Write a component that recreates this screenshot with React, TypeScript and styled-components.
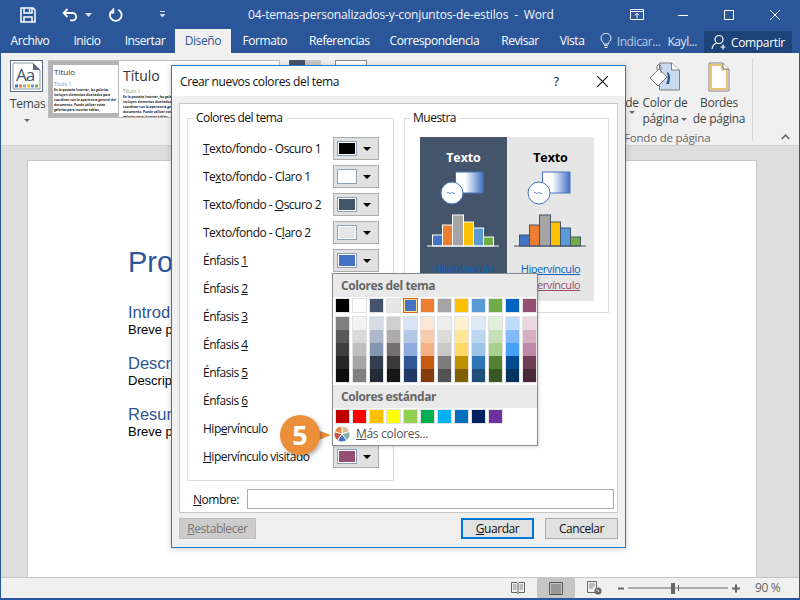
import React from "react";
import styled, { createGlobalStyle } from "styled-components";

const UI = `"Open Sans", "Noto Sans", sans-serif`;

const Global = createGlobalStyle`
  html, body { margin: 0; padding: 0; background: #fff; }
  * { box-sizing: border-box; }
`;

const Frame = styled.div`
  position: relative; width: 800px; height: 600px; overflow: hidden;
  display: flex; flex-direction: column;
  background: #2b579a; font-family: ${UI}; font-size: 12px; color: #222;
`;
const TitleBar = styled.div`
  height: 29px; flex: none; display: flex; align-items: center; color: #fff; position: relative;
`;
const Qat = styled.div`display: flex; align-items: center; padding-left: 20px; gap: 0;`;
const QatSlot = styled.div<{ $w: number }>`width: ${p => p.$w}px; display: flex; align-items: center;`;
const TitleText = styled.div`
  position: absolute; left: 248px; top: 5px; width: 304px; text-align: left; white-space: pre;
  font-size: 12px; letter-spacing: -0.15px; color: #f2f5fa; line-height: 20px;
`;
const WinButtons = styled.div`margin-left: auto; display: flex; align-items: center; padding-right: 2px;`;
const WinBtn = styled.div<{ $w: number }>`width: ${p => p.$w}px; display: flex; justify-content: center;`;

const TabBar = styled.div`
  height: 24px; flex: none; display: flex; align-items: stretch; color: #fff;
`;
const Tab = styled.div<{ $active?: boolean; $after?: number }>`
  padding: 0 ${p => (p.$active ? 10 : 10.5)}px; line-height: 24px; font-size: 12px; letter-spacing: -0.42px; white-space: nowrap;
  margin-right: ${p => p.$after ?? 0}px;
  ${p => (p.$active ? `background: #f0f0f0; color: #2b579a; margin-left: 1px;` : "")}
`;
const TabRight = styled.div`margin-left: auto; display: flex; align-items: center; padding-right: 8px;`;
const TellMe = styled.div`display: flex; align-items: center; gap: 5px; color: #b8c9e2; letter-spacing: -0.42px; margin-right: 7px;`;
const User = styled.div`color: #dfe7f3; letter-spacing: -0.42px; margin-right: 7px;`;
const Share = styled.div`
  width: 88px; height: 22px; margin-top: 2px; background: #1e4379; display: flex; align-items: center; gap: 4px; padding-left: 7px; letter-spacing: -0.35px;
  color: #fff;
`;

const Ribbon = styled.div`
  height: 93px; flex: none; background: #f0f0f0; border-bottom: 1px solid #d2d2d2; display: flex; position: relative; color: #444;
  margin: 0 1px;
`;
const ThemeGroup = styled.div`
  width: 47px; padding: 7px 0 0 9px; display: flex; flex-direction: column; align-items: flex-start;
`;
const ThemeLabel = styled.div`width: 34px; text-align: center; line-height: 16px; margin-top: 4px; letter-spacing: -0.3px;`;
const Caret = styled.span`
  display: inline-block; width: 0; height: 0; border: 3px solid transparent; border-top: 3px solid #666; border-bottom: 0; vertical-align: middle;
`;
const CaretRow = styled.div`width: 34px; text-align: center; line-height: 10px; margin-top: 3px;`;
const Gallery = styled.div`
  width: 232px; height: 58px; margin-top: 7px; border: 1px solid #bcbcbc; background: #fff; display: flex; overflow: hidden;
`;
const Thumb = styled.div<{ $sel?: boolean }>`
  width: 74px; flex: none; padding: 5px 0 0 4px; background: #fff; color: #333; overflow: hidden;
  ${p => (p.$sel ? `border: 4px solid #b4b4b4; border-right: 1px solid #b4b4b4; padding: 0 0 0 1px; width: 70px;` : "")}
`;
const ThumbTitle = styled.div<{ $big?: boolean }>`font-size: ${p => (p.$big ? 14 : 8)}px; line-height: ${p => (p.$big ? 20 : 14)}px; white-space: nowrap;`;
const ThumbHead = styled.div<{ $c: string; $top: number }>`font-size: 5px; line-height: 8px; color: ${p => p.$c}; margin-top: ${p => p.$top}px;`;
const ThumbBody = styled.div`font-size: 3.2px; font-weight: 700; line-height: 5px; color: #222; width: 64px;`;
const SwatchPeek = styled.div`display: flex; margin: 7px 0 0 9px; height: 10px;`;
const PeekBox = styled.div<{ $c: string; $w: number }>`width: ${p => p.$w}px; height: 10px; background: ${p => p.$c};`;
const PeekOutline = styled.div`width: 32px; height: 10px; margin: 7px 0 0 14px; border: 1px solid #888; background: #fff;`;
const RibbonFill = styled.div`flex: 1;`;
const RibbonItem = styled.div<{ $w: number }>`
  width: ${p => p.$w}px; display: flex; flex-direction: column; align-items: center; padding-top: 9px; line-height: 16px; letter-spacing: -0.25px; text-align: center; white-space: nowrap;
`;
const ItemIcon = styled.div`height: 33px;`;
const PageBackgroundLabel = styled.div`
  position: absolute; left: 623px; top: 77px; line-height: 16px; color: #666; letter-spacing: -0.2px; font-size: 11.5px; white-space: nowrap;
`;
const RibbonSep = styled.div`width: 1px; background: #d6d6d6; margin: 5px 0 4px 6px;`;
const Collapse = styled.div`width: 46px; display: flex; justify-content: flex-end; align-items: flex-end; padding: 0 9px 5px 0;`;

const DocArea = styled.div`
  flex: 1; background: #dedede; margin: 0 1px; padding: 14px 0 0 26px; overflow: hidden;
`;
const Page = styled.div`
  width: 730px; height: 440px; background: #fff; border: 1px solid #c6c6c6; padding: 84px 0 0 100px; font-family: "Liberation Sans", Arial, sans-serif;
`;
const DocTitle = styled.div`font-size: 29px; line-height: 34px; color: #2b579a; white-space: nowrap;`;
const DocHead = styled.div<{ $first?: boolean }>`font-size: 16.5px; line-height: 19px; color: #2f5597; margin-top: ${p => (p.$first ? 24 : 17)}px; white-space: nowrap;`;
const DocText = styled.div`font-size: 13px; line-height: 15px; color: #000; white-space: nowrap;`;

const StatusBar = styled.div`
  height: 21px; flex: none; margin: 0 1px 2px; background: #f0f0f0; border-top: 1px solid #c6c6c6; display: flex; align-items: stretch; justify-content: flex-end; color: #555;
`;
const ViewBtn = styled.div<{ $active?: boolean }>`
  width: 38px; display: flex; align-items: center; justify-content: center; background: ${p => (p.$active ? "#c6c6c6" : "transparent")};
`;
const ZoomWrap = styled.div`display: flex; align-items: center; width: 137px; margin-left: 5px;`;
const ZoomPct = styled.div`width: 44px; text-align: left; letter-spacing: -0.4px; line-height: 20px; color: #666;`;

const Dialog = styled.div`
  position: absolute; left: 171px; top: 65px; width: 455px; height: 483px; background: #f0f0f0; border: 1px solid #2a7ac4;
  box-shadow: 0 1px 6px rgba(0,0,0,.2); display: flex; flex-direction: column; color: #111;
`;
const DialogHead = styled.div`
  height: 30px; flex: none; background: #fff; display: flex; align-items: center; padding-left: 8px; font-size: 12px; letter-spacing: -0.38px;
`;
const HeadBtn = styled.div<{ $w: number }>`width: ${p => p.$w}px; text-align: center; font-size: 13px; display: flex; justify-content: center;`;
const HeadBtns = styled.div`margin-left: auto; display: flex; align-items: center;`;
const DialogBody = styled.div`flex: none; padding: 7px 7px 0;`;
const Panel = styled.div`
  height: 410px; background: #fff; border: 1px solid #c8c8c8; padding: 6px 8px 0 7px;
`;
const Columns = styled.div`display: flex; gap: 10px; align-items: flex-start;`;
const Group = styled.fieldset<{ $w: number; $h: number }>`
  width: ${p => p.$w}px; height: ${p => p.$h}px; margin: 0; border: 1px solid #dcdcdc; padding: 3px 0 0 0; min-width: 0;
`;
const Legend = styled.legend`margin-left: 5px; padding: 0 3px; line-height: 16px; font-size: 12px; letter-spacing: -0.5px;`;
const Rows = styled.div`display: flex; flex-direction: column; gap: 5px; margin-top: 8px;`;
const Row = styled.div`height: 23px; display: flex; align-items: center; padding-left: 15px;`;
const RowLabel = styled.div`width: 130px; white-space: nowrap; letter-spacing: -0.5px; line-height: 20px;`;
const ColorBtn = styled.div`
  width: 46px; height: 23px; background: #e1e1e1; border: 1px solid #adadad; display: flex; align-items: center; padding-left: 3px; gap: 6px;
`;
const ColorChip = styled.div<{ $c: string }>`width: 20px; height: 15px; background: ${p => p.$c}; border: 1px solid #8ea0b5; box-shadow: inset 0 0 0 1px #fff;`;
const BlackCaret = styled.div`width: 0; height: 0; border: 4px solid transparent; border-top: 4px solid #000; border-bottom: 0;`;
const PreviewBox = styled.div`display: flex; width: 174px; margin: 8px 0 0 15px; height: 164px;`;
const Pane = styled.div<{ $dark?: boolean }>`
  width: 87px; height: 164px; background: ${p => (p.$dark ? "#44546a" : "#e7e6e6")}; color: ${p => (p.$dark ? "#fff" : "#000")}; text-align: center; padding-top: 12px;
`;
const PaneTitle = styled.div`font-weight: 700; font-size: 12.5px; line-height: 17px; letter-spacing: -0.1px; margin-bottom: 5px;`;
const PaneArt = styled.svg`display: block;`;
const LinkLine = styled.div<{ $c: string; $top: number }>`
  color: ${p => p.$c}; text-decoration: underline; line-height: 16px; letter-spacing: -0.45px; margin-top: ${p => p.$top}px; font-size: 11px; white-space: nowrap;
`;
const NameRow = styled.div`display: flex; align-items: center; margin-top: 8px; padding-left: 6px;`;
const NameLabel = styled.div`width: 54px; flex: none; letter-spacing: -0.5px;`;
const NameInput = styled.div`width: 367px; flex: none; height: 20px; background: #fff; border: 1px solid #ababab;`;
const Footer = styled.div`display: flex; align-items: stretch; padding: 5px 7px 0; height: 26px; gap: 11px;`;
const FootBtn = styled.div<{ $w: number; $kind?: "primary" | "off" }>`
  width: ${p => p.$w}px; height: 21px; display: flex; align-items: center; justify-content: center; letter-spacing: -0.45px;
  background: ${p => (p.$kind === "off" ? "#cccccc" : "#e1e1e1")};
  border: ${p => (p.$kind === "primary" ? "2px solid #0078d7" : `1px solid ${p.$kind === "off" ? "#bfbfbf" : "#adadad"}`)};
  color: ${p => (p.$kind === "off" ? "#787878" : "#111")};
`;
const FootGap = styled.div`flex: 1;`;

const Popup = styled.div`
  position: absolute; left: 332px; top: 273px; width: 206px; height: 173px; background: #fff; border: 1px solid #8a8a8a; box-shadow: 1px 1px 3px rgba(0,0,0,.15);
  display: flex; flex-direction: column;
`;
const PopHead = styled.div`height: 23px; flex: none; background: #e9e9e9; padding-left: 8px; font-weight: 700; line-height: 23px; letter-spacing: -0.4px; color: #666; font-size: 12px;`;
const SwatchRow = styled.div<{ $t: number }>`display: flex; gap: 4px; padding: ${p => p.$t}px 0 0 3px;`;
const Swatch = styled.div<{ $c: string; $sel?: boolean }>`
  width: 13px; height: 13px; background: ${p => p.$c}; box-shadow: 0 0 0 1px #e2e2e2;
  ${p => (p.$sel ? `box-shadow: 0 0 0 1px #e2621a, inset 0 0 0 1px #ffe294;` : "")}
`;
const ShadeGrid = styled.div`display: flex; gap: 4px; padding: 5px 0 3px 3px;`;
const ShadeCol = styled.div`display: flex; flex-direction: column; box-shadow: 0 0 0 1px #e2e2e2;`;
const Shade = styled.div<{ $c: string }>`width: 13px; height: 13px; background: ${p => p.$c};`;
const MoreRow = styled.div`display: flex; align-items: center; gap: 6px; margin-top: 3px; padding-left: 1px; color: #555; letter-spacing: -0.3px; line-height: 16px;`;

const Badge = styled.div`
  position: absolute; left: 280px; top: 415px; width: 40px; height: 40px; border-radius: 50%; background: #ec8f3a; color: #fff;
  display: flex; align-items: center; justify-content: center; font-weight: 700; font-size: 27px; line-height: 40px;
  box-shadow: 2px 2px 4px rgba(0,0,0,.3);
`;
const BadgeTip = styled.svg`position: absolute; left: 314px; top: 424px;`;

const U = styled.span`text-decoration: underline;`;

const theme = ["#000000", "#ffffff", "#44546a", "#e7e6e6", "#4472c4", "#ed7d31", "#a5a5a5", "#ffc000", "#5b9bd5", "#70ad47", "#0563c1", "#954f72"];
const shades = [
  ["#7f7f7f", "#595959", "#3f3f3f", "#262626", "#0c0c0c"],
  ["#f2f2f2", "#d9d9d9", "#bfbfbf", "#a6a6a6", "#7f7f7f"],
  ["#d6dce5", "#adb9ca", "#8497b0", "#333f50", "#222a35"],
  ["#d0cece", "#aeabab", "#757070", "#3a3838", "#171616"],
  ["#dae3f3", "#b4c7e7", "#8faadc", "#2f5597", "#203864"],
  ["#fbe5d6", "#f8cbad", "#f4b183", "#c55a11", "#843c0c"],
  ["#ededed", "#dbdbdb", "#c9c9c9", "#7b7b7b", "#525252"],
  ["#fff2cc", "#ffe699", "#ffd966", "#bf9000", "#7f6000"],
  ["#deebf7", "#bdd7ee", "#9dc3e6", "#2e75b6", "#1f4e79"],
  ["#e2f0d9", "#c5e0b4", "#a9d18e", "#548235", "#385723"],
  ["#c0dcfb", "#84b9f9", "#48a0f9", "#034b90", "#023260"],
  ["#ead7e2", "#d5b0c5", "#c088a8", "#6f3b55", "#4a2739"],
];
const standard = ["#c00000", "#ff0000", "#ffc000", "#ffff00", "#92d050", "#00b050", "#00b0f0", "#0070c0", "#002060", "#7030a0"];

const rows: [React.ReactNode, string][] = [
  [<><U>T</U>exto/fondo - Oscuro 1</>, "#000000"],
  [<>Te<U>x</U>to/fondo - Claro 1</>, "#ffffff"],
  [<>Texto/fondo - <U>O</U>scuro 2</>, "#44546a"],
  [<>Texto/fondo - C<U>l</U>aro 2</>, "#e7e6e6"],
  [<>Énfasis <U>1</U></>, "#4472c4"],
  [<>Énfasis <U>2</U></>, "#ed7d31"],
  [<>Énfasis <U>3</U></>, "#a5a5a5"],
  [<>Énfasis <U>4</U></>, "#ffc000"],
  [<>Énfasis <U>5</U></>, "#5b9bd5"],
  [<>Énfasis <U>6</U></>, "#70ad47"],
  [<>Hip<U>e</U>rvínculo</>, "#0563c1"],
  [<><U>H</U>ipervínculo visitado</>, "#954f72"],
];

const ink = { fill: "none", stroke: "#fff", strokeWidth: 1.5 };

const SaveIcon = () => (
  <svg width="16" height="16" viewBox="0 0 16 16">
    <path d="M1 1h12l2 2v12H1z" {...ink} />
    <path d="M4 1v5h8V1M4 15v-5h8v5" {...ink} />
    <path d="M9.5 2v3" {...ink} />
  </svg>
);
const UndoIcon = () => (
  <svg width="16" height="14" viewBox="0 0 16 14">
    <path d="M2 5h8.5a3.6 3.6 0 0 1 0 7.4H8" fill="none" stroke="#fff" strokeWidth="1.8" />
    <path d="M5.5 1 1.6 5l3.9 4" fill="none" stroke="#fff" strokeWidth="1.8" />
  </svg>
);
const RepeatIcon = () => (
  <svg width="14" height="14" viewBox="0 0 14 14">
    <path d="M9.2 1.8A5.8 5.8 0 1 1 4 2" fill="none" stroke="#fff" strokeWidth="1.8" />
    <path d="M4.4 .2v4.6H.6" fill="none" stroke="#fff" strokeWidth="1.6" />
  </svg>
);
const CaretW = () => <svg width="7" height="4" viewBox="0 0 7 4"><path d="M0 0h7L3.5 4z" fill="#d6e0ef" /></svg>;
const QatMore = () => (
  <svg width="7" height="7" viewBox="0 0 7 7"><path d="M1 .5h5" stroke="#d6e0ef" /><path d="M.5 3h6L3.5 6.5z" fill="#d6e0ef" /></svg>
);
const RibbonDisplay = () => (
  <svg width="14" height="11" viewBox="0 0 14 11">
    <path d="M.5.5h13v10H.5zM.5 2.5h13" fill="none" stroke="#fff" />
    <path d="M7 9.5V4.5M4.8 6.5 7 4.2l2.2 2.3" fill="none" stroke="#fff" />
  </svg>
);
const MinIcon = () => <svg width="10" height="10" viewBox="0 0 10 10"><path d="M0 5.5h10" stroke="#fff" /></svg>;
const MaxIcon = () => <svg width="10" height="10" viewBox="0 0 10 10"><path d="M.5.5h9v9h-9z" fill="none" stroke="#fff" /></svg>;
const CloseIcon = ({ c = "#fff", s = 10 }: { c?: string; s?: number }) => (
  <svg width={s} height={s} viewBox="0 0 10 10"><path d="M0 0l10 10M10 0 0 10" stroke={c} strokeWidth={1} /></svg>
);
const Bulb = () => (
  <svg width="12" height="16" viewBox="0 0 12 16">
    <path d="M3.6 11c0-2-2.6-3-2.6-5.8a5 5 0 0 1 10 0C11 8 8.4 9 8.4 11z" fill="none" stroke="#e8eef7" />
    <path d="M4 12.5h4M4.6 14.5h2.8" stroke="#e8eef7" />
  </svg>
);
const PersonAdd = () => (
  <svg width="16" height="16" viewBox="0 0 16 16">
    <circle cx="8" cy="5.5" r="4" fill="none" stroke="#fff" strokeWidth="1.2" />
    <path d="M1 15c.6-3.2 2.6-5.6 5-6M12 10.5v5M9.5 13h5" fill="none" stroke="#fff" strokeWidth="1.2" />
  </svg>
);
const ThemesIcon = () => (
  <svg width="33" height="32" viewBox="0 0 33 32">
    <rect x=".5" y=".5" width="32" height="31" fill="#fff" stroke="#5b6a80" />
    <path d="M3 3h20l7 7v19H3z" fill="#fff" stroke="#8b94a3" />
    <path d="M23 3v7h7z" fill="#5b6a80" />
    <text x="6" y="21" fontFamily="Open Sans, sans-serif" fontSize="17" letterSpacing="-1" fill="#44546a">Aa</text>
    {["#4472c4", "#ed7d31", "#a5a5a5", "#ffc000", "#5b9bd5", "#70ad47"].map((c, i) => (
      <rect key={c} x={5 + i * 4} y="24.5" width="3" height="3" fill={c} />
    ))}
  </svg>
);
const PageColorIcon = () => (
  <svg width="32" height="30" viewBox="0 0 32 30">
    <path d="M10.5 1h12l8 7v20h-20z" fill="#c9d9ef" stroke="#7f7f7f" />
    <path d="M22.5 1v7h8" fill="#fff" stroke="#7f7f7f" />
    <path d="M10 7 1 16l8 8 9-9z" fill="#fff" stroke="#7f7f7f" />
    <path d="M8 8V4.5a2 2 0 0 1 4 0V11" fill="none" stroke="#7f7f7f" />
    <path d="M18 10c3 1 4 5 2 12h-3c2-4 2-7 1-12z" fill="#2b579a" />
  </svg>
);
const PageBorderIcon = () => (
  <svg width="22" height="30" viewBox="0 0 22 30">
    <path d="M1 1h14l6 6v22H1z" fill="#fff" stroke="#7f7f7f" />
    <path d="M3 3h11v4.5h5V27H3z" fill="none" stroke="#e8c477" strokeWidth="2" />
    <path d="M15 1v6h6" fill="#fff" stroke="#7f7f7f" />
  </svg>
);

const Art = ({ dark }: { dark?: boolean }) => {
  const id = dark ? "gd" : "gl";
  const line = dark ? "#fff" : "#44546a";
  const bars: [number, number, number, string][] = [
    [12, 10, 11, "#4472c4"], [22, 10, 21, "#ed7d31"], [32, 11, 31, "#a5a5a5"],
    [43, 10, 24, "#ffc000"], [53, 10, 18, "#5b9bd5"], [63, 10, 9, "#70ad47"],
  ];
  return (
    <PaneArt width="87" height="80" viewBox="0 0 87 80">
      <defs>
        <linearGradient id={id}>
          <stop offset="0" stopColor="#fff" />
          <stop offset=".35" stopColor="#fff" />
          <stop offset="1" stopColor="#4472c4" />
        </linearGradient>
      </defs>
      <rect x="35.5" y="1" width="27.5" height="21" fill={`url(#${id})`} stroke="#4472c4" />
      <circle cx="32" cy="22" r="11" fill="#fff" stroke="#4472c4" />
      <path d="M27 22q1-1.5 2 0t2 0 2 0 2 0" fill="none" stroke="#4472c4" strokeWidth=".8" />
      {bars.map(([x, w, h, c]) => (
        <rect key={x} x={x + 0.5} y={75 - h} width={w} height={h} fill={c} stroke={line} strokeWidth="1" />
      ))}
      <path d="M7 75h72" stroke={line} strokeWidth="1" />
    </PaneArt>
  );
};

const wedge = (a: number, b: number, r: number) => {
  const p = (d: number) => [8 + r * Math.sin((d * Math.PI) / 180), 8 - r * Math.cos((d * Math.PI) / 180)];
  const [x1, y1] = p(a);
  const [x2, y2] = p(b);
  return `M8 8L${x1.toFixed(2)} ${y1.toFixed(2)}A${r} ${r} 0 0 1 ${x2.toFixed(2)} ${y2.toFixed(2)}Z`;
};
const Pie = () => (
  <svg width="16" height="16" viewBox="0 0 16 16">
    {[
      [0, 72, "#d9c08c"], [72, 144, "#7fae9a"], [144, 216, "#4472c4"], [216, 288, "#c8553d"], [288, 360, "#e58a45"],
    ].map(([a, b, c]) => (
      <path key={String(c)} d={wedge(a as number, b as number, 7.8)} fill={c as string} stroke="#fff" strokeWidth=".9" />
    ))}
  </svg>
);
const ReadIcon = () => (
  <svg width="14" height="14" viewBox="0 0 14 14">
    <path d="M.5 1.5H6l1 1 1-1h5.5v10H8l-1 1-1-1H.5zM7 2.5v10" fill="none" stroke="#666" />
    <path d="M2 4h3.5M2 6h3.5M2 8h3.5M8.5 4H12M8.5 6H12M8.5 8H12" stroke="#888" />
  </svg>
);
const PrintIcon = () => (
  <svg width="14" height="13" viewBox="0 0 14 13">
    <path d="M.5.5h13v12H.5z" fill="none" stroke="#555" />
    <path d="M2 3h10M2 5h10M2 7h10M2 9h10M2 11h10" stroke="#666" />
  </svg>
);
const WebIcon = () => (
  <svg width="15" height="14" viewBox="0 0 15 14">
    <path d="M.5.5h9v11h-9z" fill="none" stroke="#666" />
    <path d="M2 3h6M2 5h6M2 7h4" stroke="#888" />
    <circle cx="11" cy="10" r="3.5" fill="#666" />
    <path d="M9 9h2l1 2" stroke="#f0f0f0" fill="none" />
  </svg>
);
const ZoomSlider = () => (
  <svg width="124" height="14" viewBox="0 0 124 14">
    <path d="M0 7.5h6" stroke="#666" strokeWidth="2" />
    <path d="M10 7h100" stroke="#666" />
    <rect x="53" y="2" width="4" height="11" fill="#666" />
    <path d="M60.5 4v6" stroke="#666" />
    <path d="M114 7.5h8M118 3.5v8" stroke="#666" strokeWidth="2" />
  </svg>
);

const ThumbText = "En la pestaña Insertar, las galerías incluyen elementos diseñados para coordinar con la apariencia general del documento. Puede utilizar estas galerías para insertar tablas, encabezados, pies de";

export default function App() {
  return (
    <Frame>
      <Global />
      <TitleBar>
        <Qat>
          <QatSlot $w={42}><SaveIcon /></QatSlot>
          <QatSlot $w={23}><UndoIcon /></QatSlot>
          <QatSlot $w={24}><CaretW /></QatSlot>
          <QatSlot $w={50}><RepeatIcon /></QatSlot>
          <QatSlot $w={10}><QatMore /></QatSlot>
        </Qat>
        <TitleText>04-temas-personalizados-y-conjuntos-de-estilos  -  Word</TitleText>
        <WinButtons>
          <WinBtn $w={47}><RibbonDisplay /></WinBtn>
          <WinBtn $w={46}><MinIcon /></WinBtn>
          <WinBtn $w={46}><MaxIcon /></WinBtn>
          <WinBtn $w={46}><CloseIcon /></WinBtn>
        </WinButtons>
      </TitleBar>
      <TabBar>
        <Tab $after={3}>Archivo</Tab>
        <Tab $after={3}>Inicio</Tab>
        <Tab $after={-2}>Insertar</Tab>
        <Tab $active $after={1}>Diseño</Tab>
        <Tab $after={1}>Formato</Tab>
        <Tab $after={-1}>Referencias</Tab>
        <Tab $after={1}>Correspondencia</Tab>
        <Tab>Revisar</Tab>
        <Tab>Vista</Tab>
        <TabRight>
          <TellMe><Bulb />Indicar...</TellMe>
          <User>Kayl...</User>
          <Share><PersonAdd />Compartir</Share>
        </TabRight>
      </TabBar>
      <Ribbon>
        <ThemeGroup>
          <ThemesIcon />
          <ThemeLabel>Temas</ThemeLabel>
          <CaretRow><Caret /></CaretRow>
        </ThemeGroup>
        <Gallery>
          <Thumb $sel>
            <ThumbTitle>Título</ThumbTitle>
            <ThumbHead $c="#5b8fd0" $top={1}>Título 1</ThumbHead>
            <ThumbBody>{ThumbText}</ThumbBody>
          </Thumb>
          <Thumb>
            <ThumbTitle $big>Título</ThumbTitle>
            <ThumbHead $c="#7f9a5b" $top={1}>Título 1</ThumbHead>
            <ThumbBody>{ThumbText}</ThumbBody>
          </Thumb>
        </Gallery>
        <SwatchPeek>
          <PeekBox $c="#44546a" $w={16} />
          <PeekBox $c="#c8c8c8" $w={16} />
        </SwatchPeek>
        <PeekOutline />
        <RibbonFill />
        <RibbonItem $w={12}>
          <ItemIcon />
          <div>de</div>
          <Caret />
        </RibbonItem>
        <RibbonItem $w={54}>
          <ItemIcon><PageColorIcon /></ItemIcon>
          <div>Color de</div>
          <div>página <Caret /></div>
        </RibbonItem>
        <RibbonItem $w={54}>
          <ItemIcon><PageBorderIcon /></ItemIcon>
          <div>Bordes</div>
          <div>de página</div>
        </RibbonItem>
        <RibbonSep />
        <Collapse>
          <svg width="9" height="6" viewBox="0 0 9 6"><path d="M.7 5 4.5 1.2 8.3 5" fill="none" stroke="#666" strokeWidth="1.6" /></svg>
        </Collapse>
        <PageBackgroundLabel>Fondo de página</PageBackgroundLabel>
      </Ribbon>
      <DocArea>
        <Page>
          <DocTitle>Propuesta de proyecto</DocTitle>
          <DocHead $first>Introducción</DocHead>
          <DocText>Breve presentación del proyecto</DocText>
          <DocHead>Descripción</DocHead>
          <DocText>Descripción detallada del proyecto</DocText>
          <DocHead>Resumen</DocHead>
          <DocText>Breve presentación del resumen</DocText>
        </Page>
      </DocArea>
      <StatusBar>
        <ViewBtn><ReadIcon /></ViewBtn>
        <ViewBtn $active><PrintIcon /></ViewBtn>
        <ViewBtn><WebIcon /></ViewBtn>
        <ZoomWrap><ZoomSlider /></ZoomWrap>
        <ZoomPct>90 %</ZoomPct>
      </StatusBar>

      <Dialog>
        <DialogHead>
          Crear nuevos colores del tema
          <HeadBtns>
            <HeadBtn $w={46}>?</HeadBtn>
            <HeadBtn $w={46}><CloseIcon c="#111" s={11} /></HeadBtn>
          </HeadBtns>
        </DialogHead>
        <DialogBody>
          <Panel>
            <Columns>
              <Group $w={207} $h={371}>
                <Legend>Colores del tema</Legend>
                <Rows>
                  {rows.map(([label, c], i) => (
                    <Row key={i}>
                      <RowLabel>{label}</RowLabel>
                      <ColorBtn><ColorChip $c={c} /><BlackCaret /></ColorBtn>
                    </Row>
                  ))}
                </Rows>
              </Group>
              <Group $w={205} $h={203}>
                <Legend>Muestra</Legend>
                <PreviewBox>
                  <Pane $dark>
                    <PaneTitle>Texto</PaneTitle>
                    <Art dark />
                    <LinkLine $c="#0563c1" $top={10}>Hipervínculo</LinkLine>
                  </Pane>
                  <Pane>
                    <PaneTitle>Texto</PaneTitle>
                    <Art />
                    <LinkLine $c="#0563c1" $top={10}>Hipervínculo</LinkLine>
                    <LinkLine $c="#954f72" $top={0}>Hipervínculo</LinkLine>
                  </Pane>
                </PreviewBox>
              </Group>
            </Columns>
            <NameRow>
              <NameLabel><U>N</U>ombre:</NameLabel>
              <NameInput />
            </NameRow>
          </Panel>
        </DialogBody>
        <Footer>
          <FootBtn $w={77} $kind="off"><span><U>R</U>establecer</span></FootBtn>
          <FootGap />
          <FootBtn $w={73} $kind="primary"><span><U>G</U>uardar</span></FootBtn>
          <FootBtn $w={73}>Cancelar</FootBtn>
        </Footer>
      </Dialog>

      <Popup>
        <PopHead>Colores del tema</PopHead>
        <SwatchRow $t={2}>
          {theme.map((c, i) => <Swatch key={c} $c={c} $sel={i === 4} />)}
        </SwatchRow>
        <ShadeGrid>
          {shades.map((col, i) => (
            <ShadeCol key={i}>{col.map((c, j) => <Shade key={j} $c={c} />)}</ShadeCol>
          ))}
        </ShadeGrid>
        <PopHead>Colores estándar</PopHead>
        <SwatchRow $t={2}>
          {standard.map(c => <Swatch key={c} $c={c} />)}
        </SwatchRow>
        <MoreRow><Pie /><span><U>M</U>ás colores...</span></MoreRow>
      </Popup>

      <BadgeTip width="20" height="22" viewBox="0 0 20 22">
        <path d="M0 5 17 11 0 18z" fill="#ec8f3a" />
      </BadgeTip>
      <Badge>5</Badge>
    </Frame>
  );
}
